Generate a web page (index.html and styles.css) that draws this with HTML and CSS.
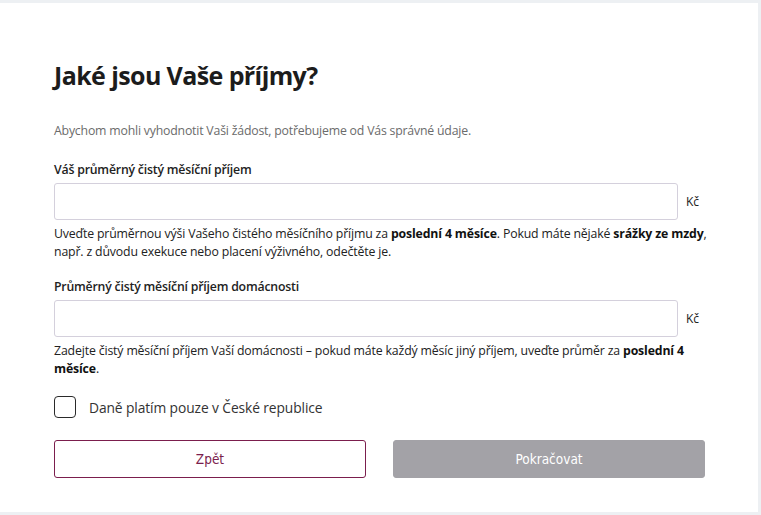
FILE: index.html
```html
<!DOCTYPE html>
<html lang="cs">
<head>
<meta charset="utf-8">
<link rel="stylesheet" href="styles.css">
</head>
<body>
<div class="frame">
  <main class="card">
    <h1 class="title">Jaké jsou Vaše příjmy?</h1>
    <p class="intro">Abychom mohli vyhodnotit Vaši žádost, potřebujeme od Vás správné údaje.</p>

    <div class="field">
      <label class="label">Váš průměrný čistý měsíční příjem</label>
      <div class="input-row">
        <input class="input" type="text">
        <span class="unit">Kč</span>
      </div>
      <p class="help">Uveďte průměrnou výši Vašeho čistého měsíčního příjmu za <b>poslední 4 měsíce</b>. Pokud máte nějaké <b>srážky ze mzdy</b>, např. z důvodu exekuce nebo placení výživného, odečtěte je.</p>
    </div>

    <div class="field">
      <label class="label">Průměrný čistý měsíční příjem domácnosti</label>
      <div class="input-row">
        <input class="input" type="text">
        <span class="unit">Kč</span>
      </div>
      <p class="help">Zadejte čistý měsíční příjem Vaší domácnosti – pokud máte každý měsíc jiný příjem, uveďte průměr za <b>poslední 4 měsíce</b>.</p>
    </div>

    <label class="check">
      <span class="box"></span>
      <span class="check-text">Daně platím pouze v České republice</span>
    </label>

    <div class="actions">
      <button class="btn btn-back">Zpět</button>
      <button class="btn btn-next">Pokračovat</button>
    </div>
  </main>
</div>
</body>
</html>
```

FILE: styles.css
```css
* { box-sizing: border-box; }
html, body { margin: 0; padding: 0; }
body {
  background: #edf0f3;
  font-family: "Open Sans", "Noto Sans", sans-serif;
  color: #1a1a1a;
  width: 761px;
  height: 515px;
  overflow: hidden;
}
.frame {
  padding: 3px 3px 3px 0;
  height: 515px;
}
.card {
  background: #fff;
  height: 509px;
  padding: 55px 0 0 54px;
}
.title {
  margin: 0;
  font-size: 25px;
  font-weight: 700;
  letter-spacing: -0.6px;
  line-height: 34px;
  color: #1c1c1c;
}
.intro {
  margin: 30px 0 0;
  font-size: 12.3px;
  letter-spacing: -0.2px;
  line-height: 18px;
  color: #6b6b6b;
}
.field { margin-top: 21px; }
.field + .field { margin-top: 17px; }
.label {
  display: block;
  font-size: 12.3px;
  font-weight: 600;
  letter-spacing: -0.2px;
  line-height: 18px;
  color: #222;
}
.input-row {
  display: flex;
  align-items: center;
  margin-top: 4px;
}
.input {
  width: 624px;
  height: 37px;
  border: 1px solid #d4d0dc;
  border-radius: 3px;
  background: #fff;
  outline: none;
}
.unit {
  margin-left: 8px;
  font-size: 12px;
  color: #222;
}
.help {
  margin: 5px 0 0;
  width: 662px;
  font-size: 12.3px;
  letter-spacing: -0.15px;
  line-height: 18px;
  color: #222;
}
.help b { font-weight: 700; color: #111; }
.check {
  display: flex;
  align-items: center;
  margin-top: 18px;
}
.box {
  width: 22px;
  height: 22px;
  border: 1.5px solid #2a2a2a;
  border-radius: 4px;
}
.check-text {
  margin-left: 13px;
  font-size: 13.8px;
  letter-spacing: -0.1px;
  color: #333;
}
.actions {
  display: flex;
  gap: 27px;
  margin-top: 22px;
}
.btn {
  width: 312px;
  height: 38px;
  border-radius: 3px;
  font-family: "DejaVu Sans Condensed", "Open Sans", sans-serif;
  font-size: 13.5px;
}
.btn-back {
  background: #fff;
  border: 1px solid #7b1e4d;
  color: #7b1e4d;
}
.btn-next {
  background: #a3a2a7;
  border: 1px solid #a3a2a7;
  color: #fff;
}
```
